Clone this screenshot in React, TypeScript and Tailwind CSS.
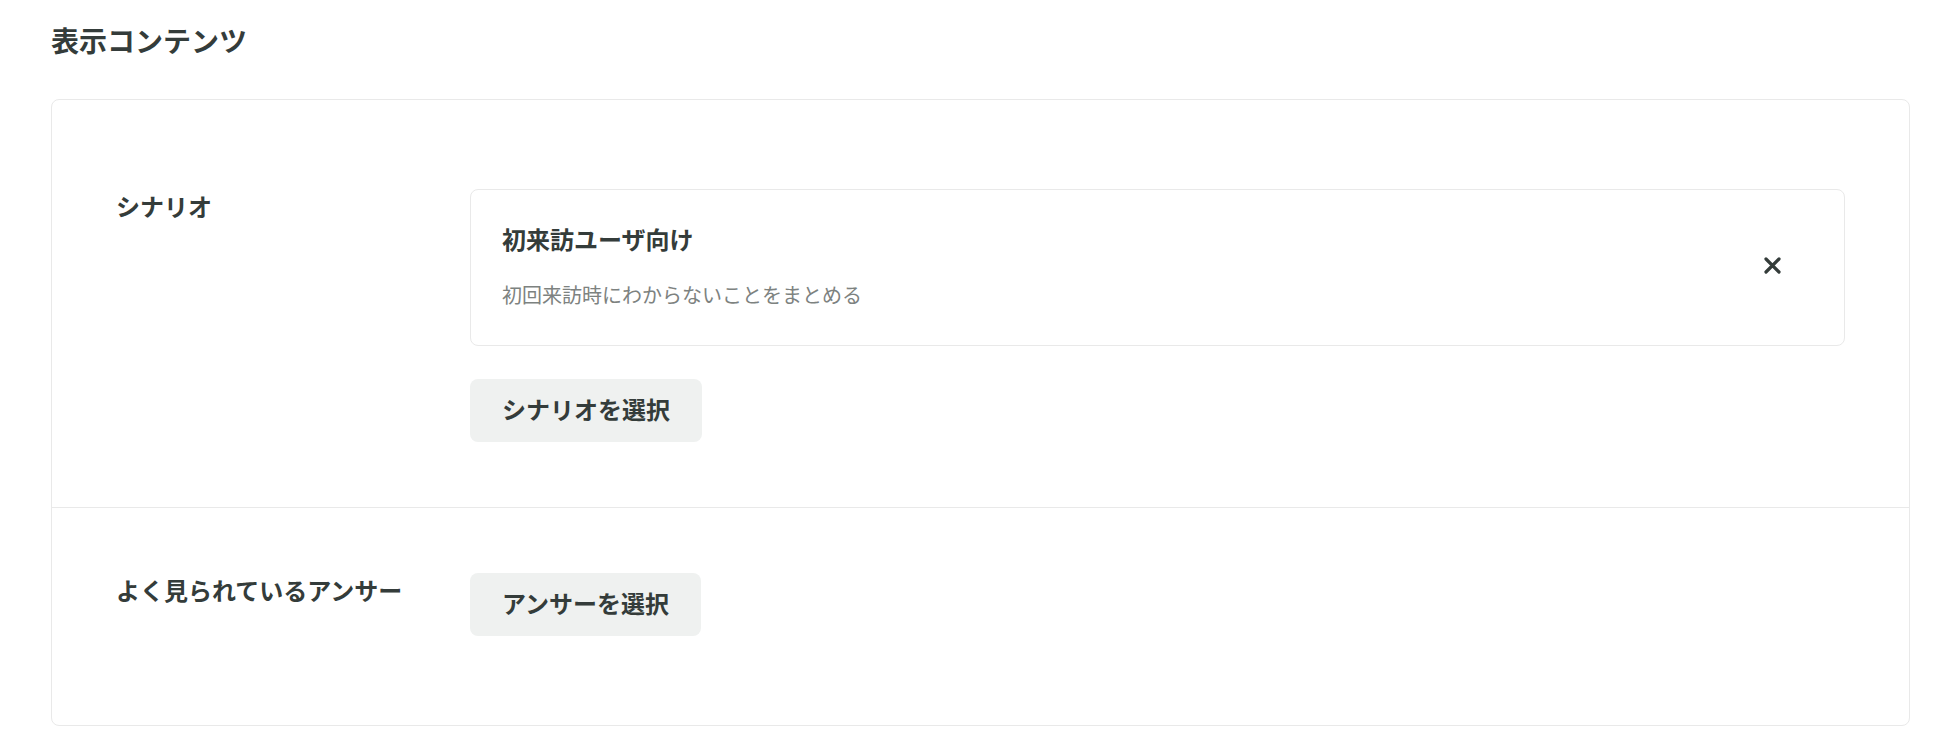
import React from "react";

const font = { fontFamily: '"Noto Sans CJK JP", "Noto Sans", sans-serif' };

export default function App() {
  return (
    <div
      className="min-h-[752px] w-[1960px] bg-white pl-[51px] pr-[50px] pt-[19px] text-[#343c3a]"
      style={font}
    >
      <h1 className="mb-[38px] text-[28px] font-bold leading-[42px]">表示コンテンツ</h1>
      <div className="rounded-lg border border-[#e9e9e9] py-[24px]">
        <section className="flex border-b border-[#e9e9e9] px-16 py-[65px]">
          <div className="-mt-[1px] w-[354px] shrink-0 text-[24px] font-bold leading-[36px]">シナリオ</div>
          <div className="flex-1">
            <div className="flex items-center justify-between rounded-lg border border-[#e9e9e9] pb-[35px] pl-[31px] pt-[31px]">
              <div>
                <div className="text-[24px] font-bold leading-[36px]">初来訪ユーザ向け</div>
                <div className="mt-[23px] text-[20px] leading-[30px] text-[#7d8280]">
                  初回来訪時にわからないことをまとめる
                </div>
              </div>
              <button className="mr-[63px] flex h-[17px] w-[17px] items-center justify-center">
                <svg width="17" height="17" viewBox="0 0 17 17" fill="none">
                  <path
                    d="M2 2L15 15M15 2L2 15"
                    stroke="#343c3a"
                    strokeWidth="3.2"
                    strokeLinecap="round"
                  />
                </svg>
              </button>
            </div>
            <button className="mt-[33px] h-[63px] rounded-lg bg-[#eff1f0] px-8 pb-[3px] text-[24px] font-bold leading-[36px]">
              シナリオを選択
            </button>
          </div>
        </section>
        <section className="flex px-16 py-[65px]">
          <div className="-mt-[1px] w-[354px] shrink-0 text-[24px] font-bold leading-[36px]">
            よく見られているアンサー
          </div>
          <div className="flex-1">
            <button className="h-[63px] rounded-lg bg-[#eff1f0] px-8 pb-[3px] text-[24px] font-bold leading-[36px]">
              アンサーを選択
            </button>
          </div>
        </section>
      </div>
    </div>
  );
}
